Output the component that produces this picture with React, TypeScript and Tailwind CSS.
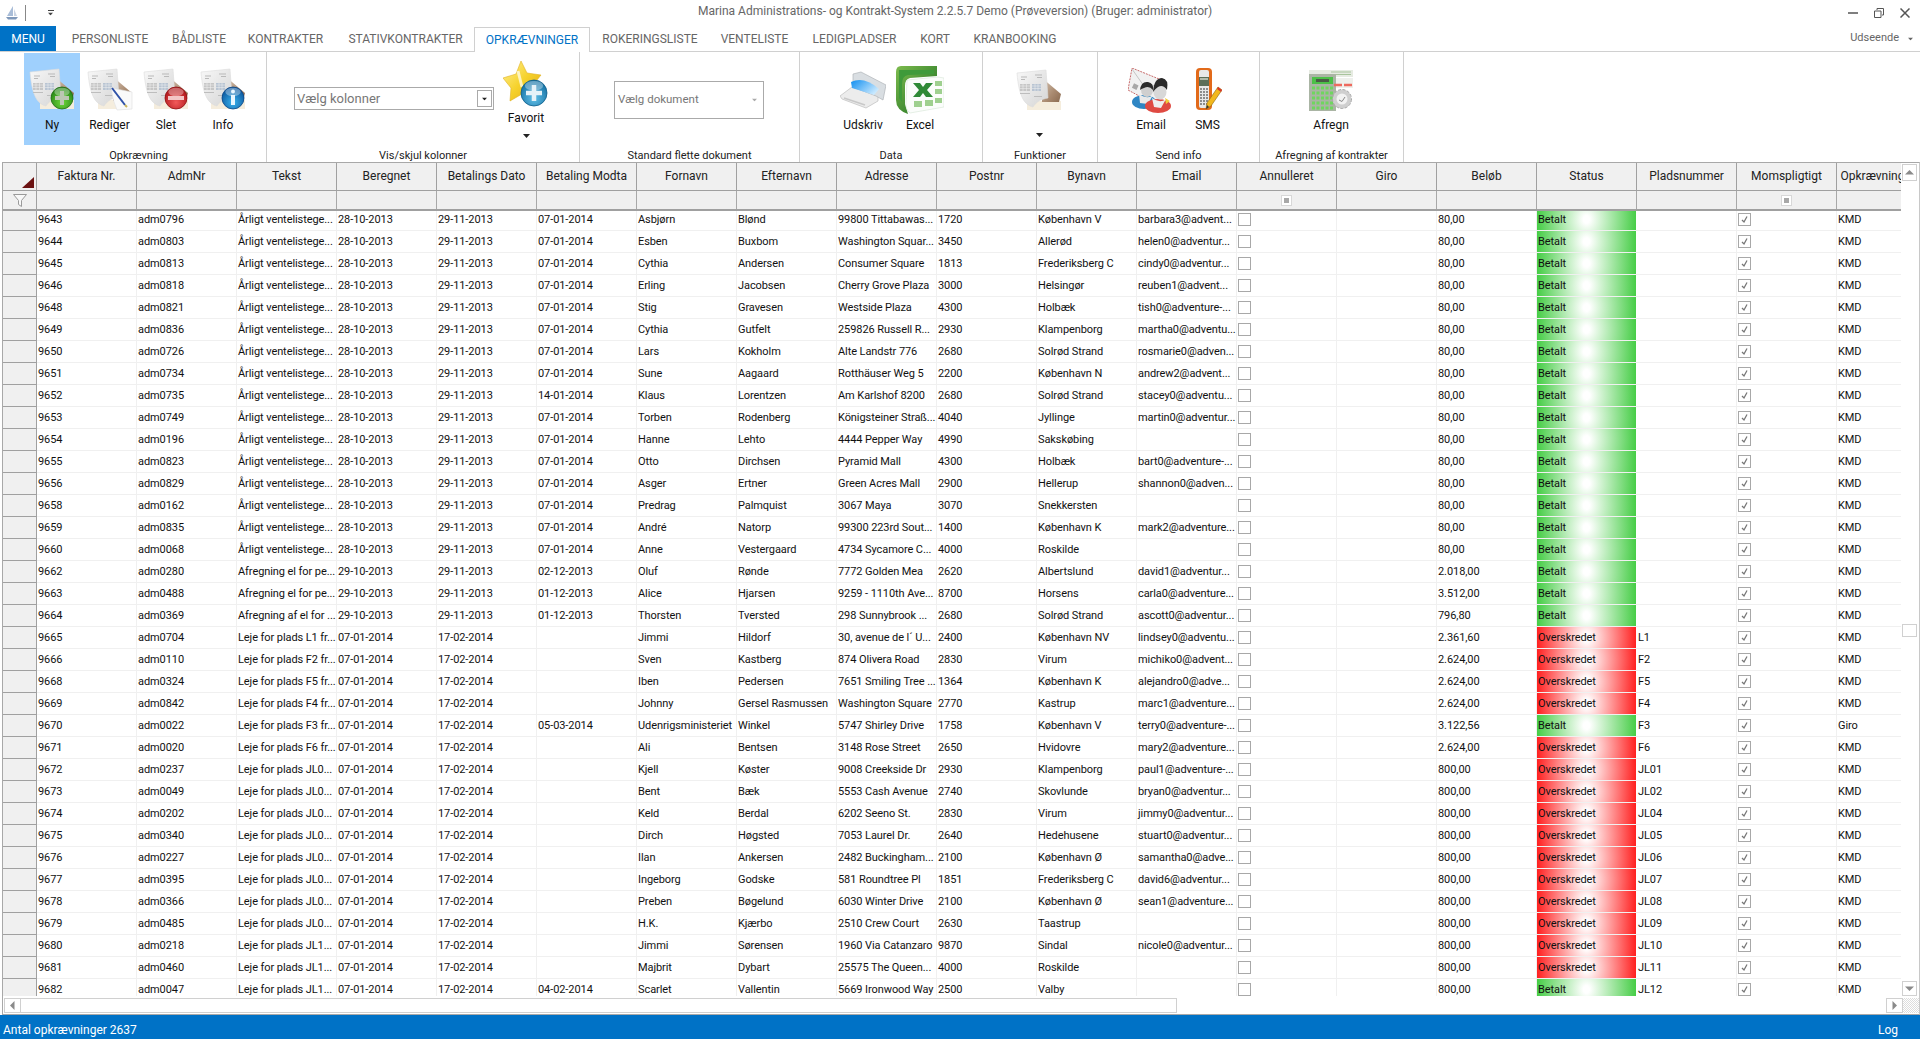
const FONT = "font-['Roboto',sans-serif]";

const columns = [
  "Faktura Nr.", "AdmNr", "Tekst", "Beregnet", "Betalings Dato", "Betaling Modta", "Fornavn", "Efternavn", "Adresse", "Postnr",
  "Bynavn", "Email", "Annulleret", "Giro", "Beløb", "Status", "Pladsnummer", "Momspligtigt", "Opkrævning",
];

const AARLIG = "Årligt ventelistege...";
const D1 = "28-10-2013";
const D2 = "29-11-2013";
const D3 = "07-01-2014";
const D4 = "17-02-2014";
const JL0 = "Leje for plads JL0...";
const JL1 = "Leje for plads JL1...";

// faktura, adm, tekst, beregnet, betalingsdato, modtaget, fornavn, efternavn, adresse, postnr, by, email, beløb, status, plads, opkrævning
const rows: string[][] = [
  ["9643", "adm0796", AARLIG, D1, D2, D3, "Asbjørn", "Blønd", "99800 Tittabawas...", "1720", "København V", "barbara3@advent...", "80,00", "B", "", "KMD"],
  ["9644", "adm0803", AARLIG, D1, D2, D3, "Esben", "Buxbom", "Washington Squar...", "3450", "Allerød", "helen0@adventur...", "80,00", "B", "", "KMD"],
  ["9645", "adm0813", AARLIG, D1, D2, D3, "Cythia", "Andersen", "Consumer Square", "1813", "Frederiksberg C", "cindy0@adventur...", "80,00", "B", "", "KMD"],
  ["9646", "adm0818", AARLIG, D1, D2, D3, "Erling", "Jacobsen", "Cherry Grove Plaza", "3000", "Helsingør", "reuben1@advent...", "80,00", "B", "", "KMD"],
  ["9648", "adm0821", AARLIG, D1, D2, D3, "Stig", "Gravesen", "Westside Plaza", "4300", "Holbæk", "tish0@adventure-...", "80,00", "B", "", "KMD"],
  ["9649", "adm0836", AARLIG, D1, D2, D3, "Cythia", "Gutfelt", "259826 Russell R...", "2930", "Klampenborg", "martha0@adventu...", "80,00", "B", "", "KMD"],
  ["9650", "adm0726", AARLIG, D1, D2, D3, "Lars", "Kokholm", "Alte Landstr 776", "2680", "Solrød Strand", "rosmarie0@adven...", "80,00", "B", "", "KMD"],
  ["9651", "adm0734", AARLIG, D1, D2, D3, "Sune", "Aagaard", "Rotthäuser Weg 5", "2200", "København N", "andrew2@advent...", "80,00", "B", "", "KMD"],
  ["9652", "adm0735", AARLIG, D1, D2, "14-01-2014", "Klaus", "Lorentzen", "Am Karlshof 8200", "2680", "Solrød Strand", "stacey0@adventu...", "80,00", "B", "", "KMD"],
  ["9653", "adm0749", AARLIG, D1, D2, D3, "Torben", "Rodenberg", "Königsteiner Straß...", "4040", "Jyllinge", "martin0@adventur...", "80,00", "B", "", "KMD"],
  ["9654", "adm0196", AARLIG, D1, D2, D3, "Hanne", "Lehto", "4444 Pepper Way", "4990", "Sakskøbing", "", "80,00", "B", "", "KMD"],
  ["9655", "adm0823", AARLIG, D1, D2, D3, "Otto", "Dirchsen", "Pyramid Mall", "4300", "Holbæk", "bart0@adventure-...", "80,00", "B", "", "KMD"],
  ["9656", "adm0829", AARLIG, D1, D2, D3, "Asger", "Ertner", "Green Acres Mall", "2900", "Hellerup", "shannon0@adven...", "80,00", "B", "", "KMD"],
  ["9658", "adm0162", AARLIG, D1, D2, D3, "Predrag", "Palmquist", "3067 Maya", "3070", "Snekkersten", "", "80,00", "B", "", "KMD"],
  ["9659", "adm0835", AARLIG, D1, D2, D3, "André", "Natorp", "99300 223rd Sout...", "1400", "København K", "mark2@adventure...", "80,00", "B", "", "KMD"],
  ["9660", "adm0068", AARLIG, D1, D2, D3, "Anne", "Vestergaard", "4734 Sycamore C...", "4000", "Roskilde", "", "80,00", "B", "", "KMD"],
  ["9662", "adm0280", "Afregning el for pe...", "29-10-2013", D2, "02-12-2013", "Oluf", "Rønde", "7772 Golden Mea", "2620", "Albertslund", "david1@adventur...", "2.018,00", "B", "", "KMD"],
  ["9663", "adm0488", "Afregning el for pe...", "29-10-2013", D2, "01-12-2013", "Alice", "Hjarsen", "9259 - 1110th Ave...", "8700", "Horsens", "carla0@adventure...", "3.512,00", "B", "", "KMD"],
  ["9664", "adm0369", "Afregning af el for ...", "29-10-2013", D2, "01-12-2013", "Thorsten", "Tversted", "298 Sunnybrook ...", "2680", "Solrød Strand", "ascott0@adventur...", "796,80", "B", "", "KMD"],
  ["9665", "adm0704", "Leje for plads L1 fr...", D3, D4, "", "Jimmi", "Hildorf", "30, avenue de l´ U...", "2400", "København NV", "lindsey0@adventu...", "2.361,60", "O", "L1", "KMD"],
  ["9666", "adm0110", "Leje for plads F2 fr...", D3, D4, "", "Sven", "Kastberg", "874 Olivera Road", "2830", "Virum", "michiko0@advent...", "2.624,00", "O", "F2", "KMD"],
  ["9668", "adm0324", "Leje for plads F5 fr...", D3, D4, "", "Iben", "Pedersen", "7651 Smiling Tree ...", "1364", "København K", "alejandro0@adve...", "2.624,00", "O", "F5", "KMD"],
  ["9669", "adm0842", "Leje for plads F4 fr...", D3, D4, "", "Johnny", "Gersel Rasmussen", "Washington Square", "2770", "Kastrup", "marc1@adventure...", "2.624,00", "O", "F4", "KMD"],
  ["9670", "adm0022", "Leje for plads F3 fr...", D3, D4, "05-03-2014", "Udenrigsministeriet", "Winkel", "5747 Shirley Drive", "1758", "København V", "terry0@adventure-...", "3.122,56", "B", "F3", "Giro"],
  ["9671", "adm0020", "Leje for plads F6 fr...", D3, D4, "", "Ali", "Bentsen", "3148 Rose Street", "2650", "Hvidovre", "mary2@adventure...", "2.624,00", "O", "F6", "KMD"],
  ["9672", "adm0237", JL0, D3, D4, "", "Kjell", "Køster", "9008 Creekside Dr", "2930", "Klampenborg", "paul1@adventure-...", "800,00", "O", "JL01", "KMD"],
  ["9673", "adm0049", JL0, D3, D4, "", "Bent", "Bæk", "5553 Cash Avenue", "2740", "Skovlunde", "bryan0@adventur...", "800,00", "O", "JL02", "KMD"],
  ["9674", "adm0202", JL0, D3, D4, "", "Keld", "Berdal", "6202 Seeno St.", "2830", "Virum", "jimmy0@adventur...", "800,00", "O", "JL04", "KMD"],
  ["9675", "adm0340", JL0, D3, D4, "", "Dirch", "Høgsted", "7053 Laurel Dr.", "2640", "Hedehusene", "stuart0@adventur...", "800,00", "O", "JL05", "KMD"],
  ["9676", "adm0227", JL0, D3, D4, "", "Ilan", "Ankersen", "2482 Buckingham...", "2100", "København Ø", "samantha0@adve...", "800,00", "O", "JL06", "KMD"],
  ["9677", "adm0395", JL0, D3, D4, "", "Ingeborg", "Godske", "581 Roundtree Pl", "1851", "Frederiksberg C", "david6@adventur...", "800,00", "O", "JL07", "KMD"],
  ["9678", "adm0366", JL0, D3, D4, "", "Preben", "Bøgelund", "6030 Winter Drive", "2100", "København Ø", "sean1@adventure...", "800,00", "O", "JL08", "KMD"],
  ["9679", "adm0485", JL0, D3, D4, "", "H.K.", "Kjærbo", "2510 Crew Court", "2630", "Taastrup", "", "800,00", "O", "JL09", "KMD"],
  ["9680", "adm0218", JL1, D3, D4, "", "Jimmi", "Sørensen", "1960 Via Catanzaro", "9870", "Sindal", "nicole0@adventur...", "800,00", "O", "JL10", "KMD"],
  ["9681", "adm0460", JL1, D3, D4, "", "Majbrit", "Dybart", "25575 The Queen...", "4000", "Roskilde", "", "800,00", "O", "JL11", "KMD"],
  ["9682", "adm0047", JL1, D3, D4, "04-02-2014", "Scarlet", "Vallentin", "5669 Ironwood Way", "2500", "Valby", "", "800,00", "B", "JL12", "KMD"],
];

const Caret = ({ className = "" }: { className?: string }) => (
  <svg viewBox="0 0 7 4" className={`h-[4px] w-[7px] ${className}`}>
    <path d="M0 0h7L3.5 4z" fill="currentColor" />
  </svg>
);

const DocBase = ({ id, paperOnly = false }: { id: string; paperOnly?: boolean }) => (
  <g>
    <defs>
      <linearGradient id={`${id}-p`} x1="0" y1="0" x2="1" y2="1">
        <stop offset="0" stopColor="#f8f8f8" />
        <stop offset="1" stopColor="#d5d5d5" />
      </linearGradient>
      <linearGradient id={`${id}-b`} x1="0" y1="0" x2="1" y2="1">
        <stop offset="0" stopColor="#d8c8b8" />
        <stop offset="0.6" stopColor="#a98a70" />
        <stop offset="1" stopColor="#8a6a50" />
      </linearGradient>
    </defs>
    <rect x="11" y="32" width="34" height="9" fill="#f5eddd" />
    {!paperOnly && <polygon points="26,9 45,25 43,33 26,33" fill={`url(#${id}-b)`} />}
    <path d="M1 4 L30 1 L32 29 C25 30 20 33 17 38 C9 36 3 29 1 4Z" fill={`url(#${id}-p)`} stroke="#dcdcdc" strokeWidth="0.6" />
    <path d="M5 8h6M5 10.500h4M19 6h7M21 8.500h5" stroke="#b9b9b9" strokeWidth="1" />
    <g fill="#bdbdbd">
      <rect x="4" y="15" width="10" height="7" opacity="0.8" />
      <rect x="16" y="15" width="9" height="7" fill="#b8c4d2" />
      <rect x="4" y="24" width="10" height="1" />
      <rect x="18" y="27" width="8" height="1" />
    </g>
    <path d="M4 17h10M4 19.500h10M7 15v7M10.500 15v7M16 17h9M16 19.500h9M19 15v7M22 15v7" stroke="#f2f2f2" strokeWidth="0.5" />
  </g>
);

const Badge = ({ id, from, to, edge, children, cx = 33, cy = 30, r = 11 }: { id: string; from: string; to: string; edge: string; children: React.ReactNode; cx?: number; cy?: number; r?: number }) => (
  <g>
    <defs>
      <radialGradient id={id} cx="0.5" cy="0.7" r="0.7">
        <stop offset="0" stopColor={from} />
        <stop offset="1" stopColor={to} />
      </radialGradient>
    </defs>
    <circle cx={cx} cy={cy} r={r} fill={`url(#${id})`} stroke={edge} strokeWidth="0.8" />
    <ellipse cx={cx} cy={cy - r * 0.55} rx={r * 0.7} ry={r * 0.38} fill="#fff" opacity="0.35" />
    {children}
  </g>
);

const IconNy = () => (
  <svg viewBox="0 0 46 44" className="h-[44px] w-[46px]">
    <DocBase id="ny" />
    <Badge id="ny-c" from="#6fd83a" to="#1f7d14" edge="#1f6b14">
      <path d="M33 23v14M26 30h14" stroke="#bcc7b4" strokeWidth="4" />
    </Badge>
  </svg>
);

const IconRediger = () => (
  <svg viewBox="0 0 46 44" className="h-[44px] w-[46px]">
    <DocBase id="red" />
    <path d="M24 20 L45 24 L45 41 L30 42 Q26 34 24 20Z" fill="#fafafa" stroke="#dedede" strokeWidth="0.6" />
    <path d="M25 20 L38 37" stroke="#2f52a8" strokeWidth="2" />
    <path d="M38 37 L40 39" stroke="#c9b45a" strokeWidth="2" />
  </svg>
);

const IconSlet = () => (
  <svg viewBox="0 0 46 44" className="h-[44px] w-[46px]">
    <DocBase id="sl" />
    <Badge id="sl-c" from="#f25a5a" to="#a80f14" edge="#8e0e10">
      <rect x="25" y="28" width="16" height="4" fill="#f3c6c6" />
    </Badge>
  </svg>
);

const IconInfo = () => (
  <svg viewBox="0 0 46 44" className="h-[44px] w-[46px]">
    <DocBase id="inf" />
    <Badge id="inf-c" from="#38b2ee" to="#0a4f96" edge="#0a4585">
      <circle cx="33" cy="23.500" r="2" fill="#e8f6ff" />
      <rect x="31" y="27" width="4" height="10" fill="#e8f6ff" />
    </Badge>
  </svg>
);

const IconFunktioner = () => (
  <svg viewBox="0 0 46 44" className="h-[44px] w-[46px]">
    <DocBase id="fn" />
  </svg>
);

const IconStar = () => (
  <svg viewBox="0 0 46 46" className="h-[46px] w-[46px]">
    <defs>
      <linearGradient id="st" x1="0" y1="0" x2="1" y2="1">
        <stop offset="0" stopColor="#fff199" />
        <stop offset="0.5" stopColor="#f6d22c" />
        <stop offset="1" stopColor="#e2a80e" />
      </linearGradient>
    </defs>
    <polygon points="18,0 24,12 38,14 30,24 33,38 19,33 7,40 8,27 0,17 13,13" fill="url(#st)" stroke="#e0b224" strokeWidth="0.6" />
    <path d="M15 10 L19 26" stroke="#fffbe0" strokeWidth="3" opacity="0.8" />
    <Badge id="st-c" from="#62c0e8" to="#0f6b9e" edge="#0d5d8a" cx={31} cy={32} r={13}>
      <path d="M31 24v16M23 32h16" stroke="#e6f2f8" strokeWidth="4.500" />
    </Badge>
  </svg>
);

const IconPrinter = () => (
  <svg viewBox="0 0 46 38" className="h-[38px] w-[46px]">
    <defs>
      <linearGradient id="pr" x1="0" y1="0" x2="1" y2="0.6">
        <stop offset="0" stopColor="#0f8ef0" />
        <stop offset="1" stopColor="#c9e9ff" />
      </linearGradient>
    </defs>
    <path d="M0 25 L12 16 L38 25 L38 30 L26 37 L2 28Z" fill="#ececec" stroke="#bdbdbd" strokeWidth="0.7" />
    <path d="M13 3 L21 1 L46 14 L43 29 L36 25 L13 16Z" fill="#d9dee2" stroke="#b0b5b9" strokeWidth="0.7" />
    <path d="M11 11 Q24 5 39 18 L34 24 L12 17Z" fill="url(#pr)" />
    <path d="M4 27 L25 34" stroke="#c8c8c8" strokeWidth="1.500" />
  </svg>
);

const IconExcel = () => (
  <svg viewBox="0 0 48 48" className="h-[48px] w-[48px]">
    <defs>
      <linearGradient id="xl" x1="0" y1="0" x2="1" y2="1">
        <stop offset="0" stopColor="#7dbb4e" />
        <stop offset="1" stopColor="#176b1e" />
      </linearGradient>
    </defs>
    <path d="M5 0 H41 V10 L14 12 Q9 13 9 20 V38 L12 48 Q0 44 0 34 V6 Q0 0 5 0Z" fill="url(#xl)" />
    <path d="M3 4 H38 V8 L12 9 Q6 10 6 18 V36 L3 32Z" fill="#3f9a3a" />
    <path d="M11 14 L42 11 L48 12 L48 41 L14 47 Q9 43 10 36Z" fill="#fbfdfb" stroke="#cfe0cf" strokeWidth="0.5" />
    <path d="M17 17 H24 L27 21 L30 17 H37 L31 24 L37 31 H30 L27 27 L24 31 H17 L23 24Z" fill="#2f8a36" />
    <g fill="#9fd08f">
      <rect x="39" y="15" width="7" height="5" />
      <rect x="39" y="23" width="7" height="5" />
      <rect x="39" y="32" width="7" height="5" />
      <rect x="18" y="35" width="8" height="6" />
      <rect x="29" y="34" width="8" height="6" />
    </g>
  </svg>
);

const IconEmail = () => (
  <svg viewBox="0 0 46 45" className="h-[45px] w-[46px]">
    <polygon points="4,0 36,13 26,36 0,22" fill="#f1f1f1" stroke="#c86a6a" strokeWidth="1" strokeDasharray="2 1" />
    <path d="M4 1 L18 21 L36 13" fill="none" stroke="#c5c5c5" strokeWidth="1" />
    <rect x="5" y="16" width="5" height="5" fill="#a8a8a8" transform="rotate(25 7 18)" />
    <ellipse cx="16" cy="34" rx="12" ry="7" fill="#2f86c4" />
    <path d="M11 26 Q20 32 25 27 L20 36 L12 35Z" fill="#eaeaea" />
    <ellipse cx="19" cy="22" rx="6" ry="7" fill="#cfcfcf" />
    <path d="M12 22 Q13 13 20 14 Q26 15 25 22 Q21 17 16 20 Q13 21 12 22Z" fill="#2c2c2c" />
    <ellipse cx="30" cy="38" rx="13" ry="7" fill="#df4a42" />
    <path d="M37 30 L42 33 L38 36Z" fill="#efcd3a" />
    <path d="M24 30 Q32 36 38 31 L33 40 L26 39Z" fill="#eeeeee" />
    <ellipse cx="32" cy="24" rx="6.500" ry="7.500" fill="#d8d8d8" />
    <path d="M25 24 Q26 10 34 10 Q41 11 39 22 Q35 16 30 19 Q27 21 25 24Z" fill="#2a2a2a" />
  </svg>
);

const IconSms = () => (
  <svg viewBox="0 0 28 45" className="h-[45px] w-[28px]">
    <rect x="2" y="0" width="16" height="42" rx="4" fill="#e26a1a" />
    <rect x="5" y="2" width="10" height="38" rx="2" fill="#e8e8e8" />
    <rect x="5" y="9" width="10" height="9" fill="#5c6e58" />
    <path d="M6 11h8" stroke="#cfd6c8" strokeWidth="1.500" />
    <path d="M6 21h8M6 24h8M6 27h8M6 30h8M6 33h8M6 36h8" stroke="#6e6e6e" strokeWidth="1.500" strokeDasharray="2 1" />
    <path d="M12 41 L13 35 L24 19 L28 22 L17 38Z" fill="#f2b81e" stroke="#8a6410" strokeWidth="0.6" />
    <path d="M24 19 L28 22 L27 24 L23 21Z" fill="#d8362a" />
    <path d="M12 41 L13 37 L15 39Z" fill="#333" />
  </svg>
);

const IconAfregn = () => (
  <svg viewBox="0 0 44 41" className="h-[41px] w-[44px]">
    <rect x="0" y="0" width="44" height="7" fill="#e6ebe2" />
    <path d="M22 2h20M22 4.500h20" stroke="#a8c49c" strokeWidth="1" />
    <rect x="0" y="4" width="27" height="37" fill="#aab5a4" />
    <rect x="3" y="7" width="21" height="7" fill="#4cc048" />
    <rect x="7" y="9" width="13" height="3" fill="#4a5a46" />
    <g stroke="#6fd65f" strokeWidth="3" strokeDasharray="3 1.500">
      <path d="M3 18h21M3 23h21M3 28h21M3 33h21M3 38h21" />
    </g>
    <rect x="27" y="8" width="17" height="10" fill="#eef0ec" />
    <path d="M25 15 h8 M35 15 h8" stroke="#ee6a5e" strokeWidth="2.500" />
    <circle cx="33" cy="29" r="9.500" fill="#cfcfcf" stroke="#a8a8a8" strokeWidth="1" strokeDasharray="3 1.500" />
    <circle cx="33" cy="29" r="5.500" fill="#f2f2f2" />
    <path d="M30 30 L33 31.500 L36 27" fill="none" stroke="#888" strokeWidth="1" />
  </svg>
);

const BoatIcon = () => (
  <svg viewBox="0 0 12 14" className="h-[14px] w-[12px]">
    <path d="M7 0 L7 10 L1 10Z" fill="#a9bdd8" />
    <path d="M8 3 L11 10 L8 10Z" fill="#c9d3e2" />
    <path d="M0 11 H12 L10 13.500 H2Z" fill="#7f98ba" />
  </svg>
);

const RibbonButton = ({ label, icon, active = false, width }: { label: string; icon: React.ReactNode; active?: boolean; width: string }) => (
  <div className={`flex h-[92px] shrink-0 flex-col items-center ${width} ${active ? "bg-[#9fd0fd]" : ""}`}>
    <div className="flex h-[64px] items-center justify-center pt-[10px]">{icon}</div>
    <span className="h-[16px] text-[12px] leading-[16px] text-[#111]">{label}</span>
  </div>
);

const RibbonGroup = ({ label, width, children, className = "", labelClass = "" }: { label: string; width: string; children?: React.ReactNode; className?: string; labelClass?: string }) => (
  <div className={`flex h-[110px] shrink-0 flex-col border-r border-[#d0d0d0] ${width}`}>
    <div className={`flex h-[97px] shrink-0 pt-[1px] ${className}`}>{children}</div>
    <div className={`whitespace-nowrap text-center text-[11px] leading-[13px] text-[#222] ${labelClass}`}>{label}</div>
  </div>
);

const Ribbon = () => (
  <div className="flex h-[110px] shrink-0">
    <RibbonGroup label="Opkrævning" width="w-[267px]" className="pl-[24px]" labelClass="pl-[11px]">
      <RibbonButton label="Ny" icon={<IconNy />} active width="w-[56px]" />
      <RibbonButton label="Rediger" icon={<IconRediger />} width="w-[59px]" />
      <RibbonButton label="Slet" icon={<IconSlet />} width="w-[54px]" />
      <RibbonButton label="Info" icon={<IconInfo />} width="w-[60px]" />
    </RibbonGroup>
    <RibbonGroup label="Vis/skjul kolonner" width="w-[313px]" className="pl-[27px]">
      <div className="mt-[34px] flex h-[23px] w-[200px] items-center justify-between border border-[#aaaaaa] pl-[2px] pr-[1px] text-[13px] text-[#777]">
        <span>Vælg kolonner</span>
        <span className="flex h-[17px] w-[15px] items-center justify-center border border-[#aaaaaa] text-[#222]">
          <Caret className="scale-75" />
        </span>
      </div>
      <div className="ml-[9px] flex w-[46px] flex-col items-center pt-[8px]">
        <IconStar />
        <span className="mt-[3px] text-[12px] leading-[16px] text-[#111]">Favorit</span>
        <Caret className="mt-[8px] text-[#222]" />
      </div>
    </RibbonGroup>
    <RibbonGroup label="Standard flette dokument" width="w-[220px]" className="pl-[34px]">
      <div className="mt-[28px] flex h-[38px] w-[150px] items-center justify-between border border-[#aaaaaa] pl-[3px] pr-[5px] text-[11.500px] text-[#777]">
        <span>Vælg dokument</span>
        <Caret className="scale-75 text-[#aaa]" />
      </div>
    </RibbonGroup>
    <RibbonGroup label="Data" width="w-[183px]" className="pl-[35px]">
      <RibbonButton label="Udskriv" icon={<IconPrinter />} width="w-[56px]" />
      <RibbonButton label="Excel" icon={<IconExcel />} width="w-[58px]" />
    </RibbonGroup>
    <RibbonGroup label="Funktioner" width="w-[115px]" className="pl-[28px]">
      <div className="flex w-[56px] flex-col items-center">
        <div className="flex h-[81px] items-start pt-[16px]">
          <IconFunktioner />
        </div>
        <Caret className="-mt-[1px] text-[#222]" />
      </div>
    </RibbonGroup>
    <RibbonGroup label="Send info" width="w-[162px]" className="pl-[25px]">
      <RibbonButton label="Email" icon={<IconEmail />} width="w-[56px]" />
      <RibbonButton label="SMS" icon={<IconSms />} width="w-[57px]" />
    </RibbonGroup>
    <RibbonGroup label="Afregning af kontrakter" width="w-[144px]" className="pl-[43px]">
      <RibbonButton label="Afregn" icon={<IconAfregn />} width="w-[56px]" />
    </RibbonGroup>
  </div>
);

const tabs = [
  { label: "PERSONLISTE", width: "w-[108px]" },
  { label: "BÅDLISTE", width: "w-[70px]" },
  { label: "KONTRAKTER", width: "w-[103px]" },
  { label: "STATIVKONTRAKTER", width: "w-[137px]" },
  { label: "OPKRÆVNINGER", width: "w-[116px]", active: true },
  { label: "ROKERINGSLISTE", width: "w-[120px]" },
  { label: "VENTELISTE", width: "w-[89px]" },
  { label: "LEDIGPLADSER", width: "w-[111px]" },
  { label: "KORT", width: "w-[50px]" },
  { label: "KRANBOOKING", width: "w-[110px]" },
];

const TabBar = () => (
  <div className="flex h-[26px] shrink-0 items-stretch border-b border-[#d0d0d0] text-[12px] text-[#666]">
    <div className="flex h-[25px] w-[56px] items-center justify-center bg-[#0072c6] text-white">MENU</div>
    {tabs.map((t) => (
      <div
        key={t.label}
        className={`relative flex items-center justify-center whitespace-nowrap ${t.width} ${
          t.active ? "mt-[1px] h-[25px] border-x border-t border-[#d0d0d0] bg-white text-[#0072c6]" : ""
        }`}
      >
        {t.label}
      </div>
    ))}
    <div className="ml-auto flex items-center gap-[8px] pr-[6px]">
      <span className="text-[11px] text-[#666]">Udseende</span>
      <Caret className="scale-75 text-[#666]" />
    </div>
  </div>
);

const TitleBar = () => (
  <div className="flex h-[26px] shrink-0 items-center text-[12px] text-[#666]">
    <div className="flex w-[698px] items-center">
      <div className="ml-[6px]">
        <BoatIcon />
      </div>
      <span className="ml-[7px] h-[16px] w-px bg-[#888]" />
      <span className="ml-[21px] flex flex-col items-center gap-[1px] text-[#444]">
        <span className="h-px w-[6px] bg-current" />
        <Caret className="scale-75" />
      </span>
    </div>
    <span className="whitespace-nowrap pb-[4px]">Marina Administrations- og Kontrakt-System 2.2.5.7 Demo (Prøveversion) (Bruger: administrator)</span>
    <div className="ml-auto flex items-center gap-[16px] pr-[10px] text-[#555]">
      <svg viewBox="0 0 10 10" className="h-[10px] w-[10px]">
        <path d="M0 5h10" stroke="currentColor" strokeWidth="1.500" />
      </svg>
      <svg viewBox="0 0 10 10" className="h-[10px] w-[10px]">
        <path d="M3 2V0.500h6.500V7H8M0.500 3h6.500v6.500H0.500z" fill="none" stroke="currentColor" strokeWidth="1" />
      </svg>
      <svg viewBox="0 0 10 10" className="h-[10px] w-[10px]">
        <path d="M0.500 0.500l9 9M9.500 0.500l-9 9" stroke="currentColor" strokeWidth="1.500" />
      </svg>
    </div>
  </div>
);

const CheckBox = ({ checked = false }: { checked?: boolean }) => (
  <span className="-mt-[1px] flex h-[13px] w-[13px] shrink-0 items-center justify-center border border-[#a8a8a8] bg-white">
    {checked && (
      <svg viewBox="0 0 9 9" className="h-[9px] w-[9px]">
        <path d="M2 5l2 2 3-5.500" fill="none" stroke="#777" strokeWidth="1.300" />
      </svg>
    )}
  </span>
);

const FilterCheck = () => (
  <span className="mx-auto flex h-[11px] w-[11px] items-center justify-center border border-[#d8d8d8] bg-white">
    <span className="h-[5px] w-[5px] bg-[#a8a8a8]" />
  </span>
);

const Cell = ({ children, className = "" }: { children?: React.ReactNode; className?: string }) => (
  <div className={`flex h-full w-[100px] shrink-0 items-center overflow-hidden whitespace-nowrap border-r border-[#f0f0f0] pl-[1px] pt-[1px] ${className}`}>{children}</div>
);

const statusClass = {
  B: "bg-[radial-gradient(ellipse_52%_300%_at_center,#ffffff_0%,#ffffff_6%,#3fcb3f_100%)]",
  O: "bg-[radial-gradient(ellipse_52%_300%_at_center,#ffffff_0%,#ffffff_6%,#ff1818_100%)]",
};

const DataRow = ({ row }: { row: string[] }) => {
  const [faktura, adm, tekst, beregnet, dato, modta, fornavn, efternavn, adresse, postnr, by, email, belob, status, plads, opkr] = row;
  return (
    <div className="flex h-[22px] shrink-0 border-b border-[#f0f0f0] text-[11px] tracking-[-0.08px] text-[#111]">
      <div className="h-[22px] w-[34px] shrink-0 border-b border-r border-[#a0a0a0] bg-[#f0f0f0]" />
      <Cell>{faktura}</Cell>
      <Cell>{adm}</Cell>
      <Cell>{tekst}</Cell>
      <Cell>{beregnet}</Cell>
      <Cell>{dato}</Cell>
      <Cell>{modta}</Cell>
      <Cell>{fornavn}</Cell>
      <Cell>{efternavn}</Cell>
      <Cell>{adresse}</Cell>
      <Cell>{postnr}</Cell>
      <Cell>{by}</Cell>
      <Cell>{email}</Cell>
      <Cell>
        <CheckBox />
      </Cell>
      <Cell />
      <Cell>{belob}</Cell>
      <Cell className={`border-white ${statusClass[status as "B" | "O"]}`}>{status === "B" ? "Betalt" : "Overskredet"}</Cell>
      <Cell>{plads}</Cell>
      <Cell>
        <CheckBox checked />
      </Cell>
      <Cell>{opkr}</Cell>
    </div>
  );
};

const ScrollButton = ({ dir, className = "" }: { dir: "up" | "down" | "left" | "right"; className?: string }) => {
  const d = { up: "M1 7.500h9L5.500 3z", down: "M1 3.500h9L5.500 8z", left: "M7.500 1v9L3 5.500z", right: "M3.500 1v9L8 5.500z" }[dir];
  return (
    <div className={`flex shrink-0 items-center justify-center border border-[#d0d0d0] bg-white ${className}`}>
      <svg viewBox="0 0 11 11" className="h-[11px] w-[11px]">
        <path d={d} fill="#8a8a8a" />
      </svg>
    </div>
  );
};

const Grid = () => (
  <div className="ml-[2px] flex min-h-0 flex-1 flex-col border-b border-l border-r border-t border-[#a8a8a8] border-r-[#c8c8c8]">
    <div className="flex min-h-0 flex-1">
      <div className="flex min-h-0 w-[1898px] shrink-0 flex-col overflow-hidden">
        <div className="flex h-[28px] shrink-0 border-b border-[#a0a0a0] bg-[#f0f0f0] text-[12px] text-[#222]">
          <div className="relative h-full w-[34px] shrink-0 border-r border-[#a0a0a0]">
            <svg viewBox="0 0 12 11" className="absolute bottom-[2px] right-[2px] h-[11px] w-[12px]">
              <path d="M12 0v11H0z" fill="#6b1212" />
            </svg>
          </div>
          {columns.map((c) => (
            <div
              key={c}
              className={`flex h-full shrink-0 items-center justify-center whitespace-nowrap border-r border-[#a0a0a0] pb-[2px] ${
                c === "Opkrævning" ? "w-[72px]" : "w-[100px]"
              }`}
            >
              {c}
            </div>
          ))}
        </div>
        <div className="relative z-10 -mb-[2px] flex h-[20px] shrink-0 border-b-2 border-[#a0a0a0] bg-[#f0f0f0]">
          <div className="flex h-full w-[34px] shrink-0 items-center justify-end border-r border-[#a0a0a0] pr-[9px]">
            <svg viewBox="0 0 14 13" className="h-[13px] w-[14px]">
              <path d="M0.500 0.500h13L8.500 6.500V12.500L5.500 10.500V6.500z" fill="#f8f8f8" stroke="#9a9a9a" />
            </svg>
          </div>
          {columns.map((c) => (
            <div key={c} className="flex h-full w-[100px] shrink-0 items-center border-r border-[#a8a8a8]">
              {(c === "Annulleret" || c === "Momspligtigt") && <FilterCheck />}
            </div>
          ))}
        </div>
        {rows.map((r) => (
          <DataRow key={r[0]} row={r} />
        ))}
      </div>
      <div className="flex w-[17px] shrink-0 flex-col pl-[1px] pr-[1px] pt-[1px]">
        <ScrollButton dir="up" className="h-[17px]" />
        <div className="h-[443px] shrink-0" />
        <div className="h-[13px] shrink-0 border border-[#d0d0d0] bg-white" />
        <div className="flex-1" />
        <ScrollButton dir="down" className="h-[15px]" />
      </div>
    </div>
    <div className="flex h-[18px] shrink-0 items-start pl-[1px] pt-[2px]">
      <ScrollButton dir="left" className="h-[15px] w-[17px]" />
      <div className="h-[15px] w-[1156px] shrink-0 border-y border-r border-[#d0d0d0] bg-white" />
      <div className="flex-1" />
      <ScrollButton dir="right" className="h-[15px] w-[17px]" />
      <div className="h-[15px] w-[16px] shrink-0 bg-[repeating-conic-gradient(#dddddd_0_25%,#ffffff_0_50%)] bg-[length:2px_2px]" />
    </div>
  </div>
);

const StatusBar = () => (
  <div className="flex h-[24px] shrink-0 items-center justify-between bg-[#0072c6] pl-[3px] pr-[22px] pt-[6px] text-[12px] text-white">
    <span>Antal opkrævninger 2637</span>
    <span>Log</span>
  </div>
);

export default function App() {
  return (
    <div className={`flex h-[1039px] w-[1920px] flex-col overflow-hidden bg-white ${FONT}`}>
      <TitleBar />
      <TabBar />
      <Ribbon />
      <Grid />
      <StatusBar />
    </div>
  );
}
